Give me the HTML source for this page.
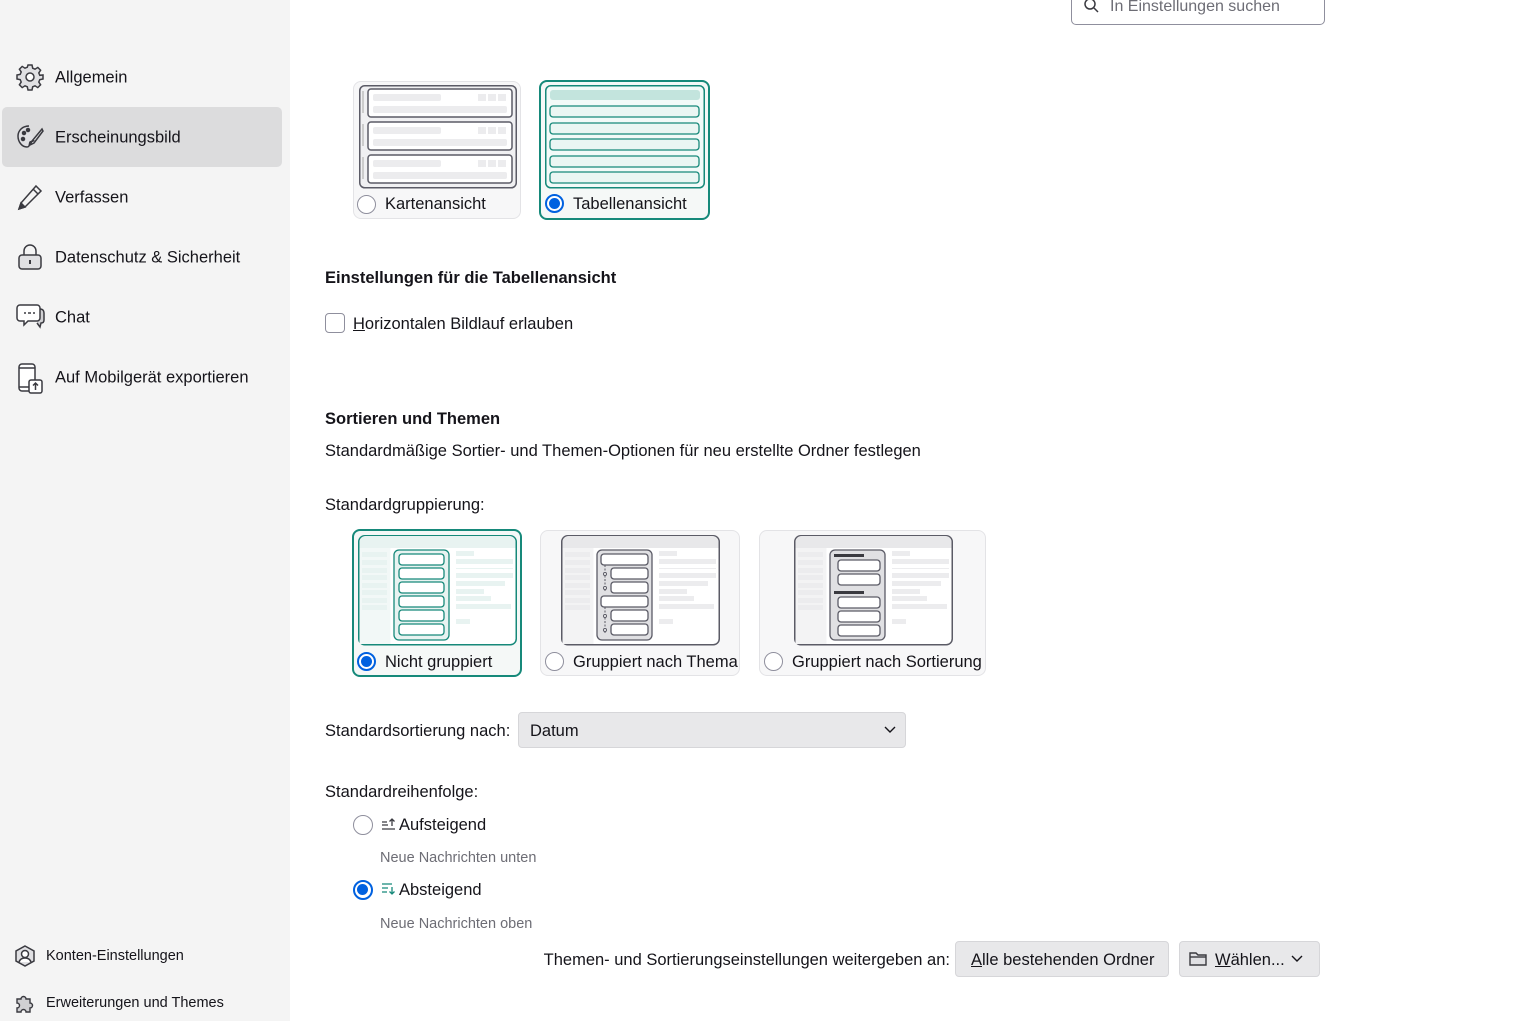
<!DOCTYPE html>
<html><head><meta charset="utf-8">
<style>
*{box-sizing:border-box;margin:0;padding:0}
body{width:1531px;height:1021px;overflow:hidden;background:#fff;font-family:"Liberation Sans",sans-serif;color:#15141a;position:relative;font-size:16.5px}
.a{position:absolute;white-space:nowrap}
#side{position:absolute;left:0;top:0;width:290px;height:1021px;background:#f4f4f4}
.nav{position:absolute;left:2px;width:280px;height:60px;border-radius:5px}
.nav span{position:absolute;left:53px;top:50%;transform:translateY(-45%);font-size:16.5px}
.nav svg{position:absolute;left:14px;top:16px}
.card{position:absolute;background:#f7f7f8;border:1px solid #e3e3e6;border-radius:8px}
.card.sel{border:2px solid #16897a;background:#f5f8f7}
.radio{position:absolute;width:19px;height:19px;border-radius:50%;border:1.5px solid #8f8f9d;background:#fff}
.radio.on{border:2px solid #0061e0;background:#fff}
.radio.on::after{content:"";position:absolute;left:2px;top:2px;width:11px;height:11px;border-radius:50%;background:#0061e0}
.lbl{position:absolute;font-size:16.5px;white-space:nowrap}
.h{font-weight:bold;font-size:16.5px}
.btn{position:absolute;background:#e8e8ea;border:1px solid #d6d6d9;border-radius:4px;font-size:16.5px}
.sub{color:#6d6d75;font-size:14.5px}
</style></head><body>
<div id="side">
  <div class="nav" style="top:47px">
    <svg width="28" height="28" viewBox="0 0 28 28" fill="none" stroke="#3a3a40" stroke-width="1.5"><path d="M12 2h4l.7 3.2 2.3 1 2.8-1.8 2.8 2.8-1.8 2.8 1 2.3L27 12v4l-3.2.7-1 2.3 1.8 2.8-2.8 2.8-2.8-1.8-2.3 1L16 27h-4l-.7-3.2-2.3-1-2.8 1.8-2.8-2.8 1.8-2.8-1-2.3L1 16v-4l3.2-.7 1-2.3-1.8-2.8 2.8-2.8 2.8 1.8 2.3-1z" fill="#e0e0e3"/><circle cx="14" cy="14" r="4" fill="#fff"/></svg>
    <span>Allgemein</span></div>
  <div class="nav" style="top:107px;background:#dcdcdd">
    <svg width="28" height="28" viewBox="0 0 28 28" fill="none" stroke="#3a3a40" stroke-width="1.5"><path d="M13 3C6 3 2 8 2 13c0 6 4 11 9 11 3 0 2-3 3-5 1-1 3 0 4-2" fill="#e0e0e3"/><circle cx="8" cy="10" r="1.5" fill="#3a3a40"/><circle cx="12" cy="7" r="1.5" fill="#3a3a40"/><circle cx="7" cy="16" r="1.5" fill="#3a3a40"/><path d="M26 6L16 18l-2 4 4-2L27 8z"/></svg>
    <span>Erscheinungsbild</span></div>
  <div class="nav" style="top:167px">
    <svg width="28" height="28" viewBox="0 0 28 28" fill="none" stroke="#3a3a40" stroke-width="1.5"><path d="M20 3l5 5L9 24l-6 2 2-6z"/><path d="M17 6l5 5"/><path d="M3 26l2-6 4 4z" fill="#3a3a40"/></svg>
    <span>Verfassen</span></div>
  <div class="nav" style="top:227px">
    <svg width="28" height="28" viewBox="0 0 28 28" fill="none" stroke="#3a3a40" stroke-width="1.5"><path d="M8 12V8a6 6 0 0112 0v4"/><rect x="3" y="12" width="22" height="14" rx="3" fill="#e0e0e3"/><rect x="13" y="17" width="2" height="4" fill="#3a3a40" stroke="none"/></svg>
    <span>Datenschutz &amp; Sicherheit</span></div>
  <div class="nav" style="top:287px">
    <svg width="30" height="28" viewBox="0 0 30 28" fill="none" stroke="#3a3a40" stroke-width="1.5"><path d="M24 6c3 0 4 2 4 4v7c0 2-1 3-3 3l-1 4-3-4" fill="#d0d0d3"/><path d="M4 2h17a3 3 0 013 3v10a3 3 0 01-3 3H12l-4 4v-4H4a3 3 0 01-3-3V5a3 3 0 013-3z" fill="#fff"/><path d="M8 10h2M12 10h3M17 10h2"/></svg>
    <span>Chat</span></div>
  <div class="nav" style="top:347px">
    <svg width="30" height="32" viewBox="0 0 30 32" fill="none" stroke="#3a3a40" stroke-width="1.5"><rect x="3" y="1" width="16" height="27" rx="3" fill="#fff"/><path d="M3 5h16M3 24h10"/><rect x="13" y="17" width="13" height="13" rx="2" fill="#fff"/><path d="M19.5 27v-7M17 22.5l2.5-2.5 2.5 2.5"/></svg>
    <span>Auf Mobilgerät exportieren</span></div>
  <div class="a" style="left:14px;top:945px"><svg width="22" height="22" viewBox="0 0 22 22" fill="none" stroke="#3a3a40" stroke-width="1.5"><path d="M11 1l9 5v10l-9 5-9-5V6z" fill="#e0e0e3"/><circle cx="11" cy="9" r="3.5" fill="#fff"/><path d="M5 17c1-3 3-4 6-4s5 1 6 4" fill="#fff"/></svg></div>
  <div class="a" style="left:46px;top:948px;font-size:14.5px">Konten-Einstellungen</div>
  <div class="a" style="left:14px;top:992px"><svg width="22" height="22" viewBox="0 0 22 22" fill="none" stroke="#3a3a40" stroke-width="1.4"><path d="M3 7h4a2.5 2.5 0 115 0h4v4a2.5 2.5 0 110 5v4h-4a2.5 2.5 0 10-5 0H3v-4a2.5 2.5 0 100-5z" fill="#d0d0d3"/></svg></div>
  <div class="a" style="left:46px;top:995px;font-size:14.5px">Erweiterungen und Themes</div>
</div>

<div class="a" style="left:1071px;top:-10px;width:254px;height:35px;border:1px solid #8f8f9d;border-radius:5px;background:#fff"></div>
<svg class="a" style="left:1084px;top:0" width="16" height="14" viewBox="0 0 16 14" fill="none" stroke="#3a3a40" stroke-width="1.5"><circle cx="6" cy="4" r="5"/><path d="M10 8l4 4"/></svg>
<div class="a" style="left:1110px;top:-2px;color:#6d6d75;font-size:16px">In Einstellungen suchen</div>

<div class="card" style="left:353px;top:81px;width:168px;height:138px"></div>
<svg class="a" style="left:359px;top:85px" width="158" height="104" viewBox="0 0 158 104">
 <rect x="0.75" y="0.75" width="156.5" height="102" rx="5" fill="#f0f0f2" stroke="#5b5b66" stroke-width="1.5"/>
 <g fill="#fff" stroke="#5b5b66" stroke-width="1.5">
 <rect x="9" y="4" width="144" height="28" rx="3"/><rect x="9" y="37" width="144" height="28" rx="3"/><rect x="9" y="70" width="144" height="28" rx="3"/></g>
 <g fill="#ececee"><rect x="14" y="9" width="68" height="7" rx="2"/><rect x="14" y="21" width="134" height="7" rx="2"/><rect x="119" y="9" width="8" height="7"/><rect x="129" y="9" width="8" height="7"/><rect x="139" y="9" width="8" height="7"/>
 <rect x="14" y="42" width="68" height="7" rx="2"/><rect x="14" y="54" width="134" height="7" rx="2"/><rect x="119" y="42" width="8" height="7"/><rect x="129" y="42" width="8" height="7"/><rect x="139" y="42" width="8" height="7"/>
 <rect x="14" y="75" width="68" height="7" rx="2"/><rect x="14" y="87" width="134" height="7" rx="2"/><rect x="119" y="75" width="8" height="7"/><rect x="129" y="75" width="8" height="7"/><rect x="139" y="75" width="8" height="7"/></g>
 <rect x="3" y="6" width="2" height="22" fill="#ccc"/><rect x="3" y="39" width="2" height="22" fill="#ccc"/><rect x="3" y="72" width="2" height="22" fill="#ccc"/>
</svg>
<div class="radio" style="left:357px;top:195px"></div>
<div class="lbl" style="left:385px;top:195px">Kartenansicht</div>

<div class="card sel" style="left:539px;top:80px;width:171px;height:140px"></div>
<svg class="a" style="left:545px;top:85px" width="160" height="104" viewBox="0 0 160 104">
 <rect x="0.75" y="0.75" width="158.5" height="102" rx="5" fill="#f2faf8" stroke="#16897a" stroke-width="1.5"/>
 <rect x="5" y="5" width="150" height="10" rx="3" fill="#c3e4dd"/>
 <g fill="#eaf6f3" stroke="#16897a" stroke-width="1.3">
 <rect x="5" y="21" width="149" height="11" rx="3"/><rect x="5" y="38" width="149" height="11" rx="3"/><rect x="5" y="54" width="149" height="11" rx="3"/><rect x="5" y="71" width="149" height="11" rx="3"/><rect x="5" y="87" width="149" height="11" rx="3"/></g>
</svg>
<div class="radio on" style="left:545px;top:194px"></div>
<div class="lbl" style="left:573px;top:195px">Tabellenansicht</div>

<div class="a h" style="left:325px;top:269px">Einstellungen für die Tabellenansicht</div>
<div class="a" style="left:325px;top:313px;width:20px;height:20px;border:1.5px solid #8f8f9d;border-radius:4px;background:#fff"></div>
<div class="a" style="left:353px;top:315px"><u>H</u>orizontalen Bildlauf erlauben</div>

<div class="a h" style="left:325px;top:410px">Sortieren und Themen</div>
<div class="a" style="left:325px;top:442px">Standardmäßige Sortier- und Themen-Optionen für neu erstellte Ordner festlegen</div>
<div class="a" style="left:325px;top:496px">Standardgruppierung:</div>

<div class="card sel" style="left:352px;top:529px;width:170px;height:148px"></div>
<svg class="a" style="left:358px;top:535px" width="159" height="111" viewBox="0 0 159 111">
 <rect x="0.75" y="0.75" width="157.5" height="109" rx="6" fill="#fff" stroke="#16897a" stroke-width="1.5"/>
 <path d="M1.5 7a6 6 0 016-6h144a6 6 0 016 6v6H1.5z" fill="#e8f3f1"/>
 <rect x="1.5" y="13" width="31" height="96" fill="#f2f8f7"/>
 <g fill="#e8f3f1"><rect x="4" y="17" width="25" height="5"/><rect x="4" y="25" width="25" height="5"/><rect x="4" y="33" width="25" height="5"/><rect x="4" y="40" width="25" height="5"/><rect x="4" y="48" width="25" height="5"/><rect x="4" y="55" width="25" height="5"/><rect x="4" y="63" width="25" height="5"/><rect x="4" y="70" width="25" height="5"/><rect x="98" y="16" width="18" height="5"/><rect x="98" y="24" width="57" height="5"/><rect x="98" y="33" width="57" height="1"/><rect x="98" y="38" width="57" height="5"/><rect x="98" y="46" width="49" height="5"/><rect x="98" y="54" width="28" height="5"/><rect x="98" y="61" width="35" height="5"/><rect x="98" y="69" width="55" height="5"/><rect x="98" y="84" width="14" height="5"/></g>
 <rect x="36" y="15" width="55" height="90" rx="5" fill="#e8f3f1" stroke="#16897a" stroke-width="1.3"/>
 <g fill="#fff" stroke="#16897a" stroke-width="1.3"><rect x="41" y="19" width="45" height="11" rx="3"/><rect x="41" y="33" width="45" height="11" rx="3"/><rect x="41" y="47" width="45" height="11" rx="3"/><rect x="41" y="61" width="45" height="11" rx="3"/><rect x="41" y="75" width="45" height="11" rx="3"/><rect x="41" y="89" width="45" height="11" rx="3"/></g>
</svg>
<div class="radio on" style="left:357px;top:652px"></div>
<div class="lbl" style="left:385px;top:653px">Nicht gruppiert</div>

<div class="card" style="left:540px;top:530px;width:200px;height:146px"></div>
<svg class="a" style="left:561px;top:535px" width="159" height="111" viewBox="0 0 159 111">
 <rect x="0.75" y="0.75" width="157.5" height="109" rx="6" fill="#fff" stroke="#5b5b66" stroke-width="1.5"/>
 <path d="M1.5 7a6 6 0 016-6h144a6 6 0 016 6v6H1.5z" fill="#e8e8ea"/>
 <rect x="1.5" y="13" width="31" height="96" fill="#f3f3f4"/>
 <g fill="#ececee"><rect x="4" y="17" width="25" height="5"/><rect x="4" y="25" width="25" height="5"/><rect x="4" y="33" width="25" height="5"/><rect x="4" y="40" width="25" height="5"/><rect x="4" y="48" width="25" height="5"/><rect x="4" y="55" width="25" height="5"/><rect x="4" y="63" width="25" height="5"/><rect x="4" y="70" width="25" height="5"/><rect x="98" y="16" width="18" height="5"/><rect x="98" y="24" width="57" height="5"/><rect x="98" y="33" width="57" height="1"/><rect x="98" y="38" width="57" height="5"/><rect x="98" y="46" width="49" height="5"/><rect x="98" y="54" width="28" height="5"/><rect x="98" y="61" width="35" height="5"/><rect x="98" y="69" width="55" height="5"/><rect x="98" y="84" width="14" height="5"/></g>
 <rect x="36" y="15" width="55" height="90" rx="5" fill="#e0e0e3" stroke="#5b5b66" stroke-width="1.3"/>
 <g fill="#fff" stroke="#5b5b66" stroke-width="1.3"><rect x="40" y="19" width="47" height="11" rx="3"/><rect x="50" y="33" width="37" height="11" rx="3"/><rect x="50" y="47" width="37" height="11" rx="3"/><rect x="40" y="61" width="47" height="11" rx="3"/><rect x="50" y="75" width="37" height="11" rx="3"/><rect x="50" y="89" width="37" height="11" rx="3"/></g>
 <g stroke="#5b5b66" stroke-width="1" fill="none" stroke-dasharray="2 1.5"><path d="M44 30v26M44 72v26"/></g>
 <g fill="#fff" stroke="#5b5b66"><circle cx="44" cy="39" r="1.5"/><circle cx="44" cy="53" r="1.5"/><circle cx="44" cy="81" r="1.5"/><circle cx="44" cy="95" r="1.5"/></g>
</svg>
<div class="radio" style="left:545px;top:652px"></div>
<div class="lbl" style="left:573px;top:653px">Gruppiert nach Thema</div>

<div class="card" style="left:759px;top:530px;width:227px;height:146px"></div>
<svg class="a" style="left:794px;top:535px" width="159" height="111" viewBox="0 0 159 111">
 <rect x="0.75" y="0.75" width="157.5" height="109" rx="6" fill="#fff" stroke="#5b5b66" stroke-width="1.5"/>
 <path d="M1.5 7a6 6 0 016-6h144a6 6 0 016 6v6H1.5z" fill="#e8e8ea"/>
 <rect x="1.5" y="13" width="31" height="96" fill="#f3f3f4"/>
 <g fill="#ececee"><rect x="4" y="17" width="25" height="5"/><rect x="4" y="25" width="25" height="5"/><rect x="4" y="33" width="25" height="5"/><rect x="4" y="40" width="25" height="5"/><rect x="4" y="48" width="25" height="5"/><rect x="4" y="55" width="25" height="5"/><rect x="4" y="63" width="25" height="5"/><rect x="4" y="70" width="25" height="5"/><rect x="98" y="16" width="18" height="5"/><rect x="98" y="24" width="57" height="5"/><rect x="98" y="33" width="57" height="1"/><rect x="98" y="38" width="57" height="5"/><rect x="98" y="46" width="49" height="5"/><rect x="98" y="54" width="28" height="5"/><rect x="98" y="61" width="35" height="5"/><rect x="98" y="69" width="55" height="5"/><rect x="98" y="84" width="14" height="5"/></g>
 <rect x="36" y="15" width="55" height="90" rx="5" fill="#e0e0e3" stroke="#5b5b66" stroke-width="1.3"/>
 <rect x="40" y="19" width="30" height="3" fill="#3a3a40"/><rect x="40" y="56" width="30" height="3" fill="#3a3a40"/>
 <g fill="#fff" stroke="#5b5b66" stroke-width="1.3"><rect x="44" y="25" width="42" height="11" rx="3"/><rect x="44" y="39" width="42" height="11" rx="3"/><rect x="44" y="62" width="42" height="11" rx="3"/><rect x="44" y="76" width="42" height="11" rx="3"/><rect x="44" y="90" width="42" height="11" rx="3"/></g>
</svg>
<div class="radio" style="left:764px;top:652px"></div>
<div class="lbl" style="left:792px;top:653px">Gruppiert nach Sortierung</div>

<div class="a" style="left:325px;top:722px">Standardsortierung nach:</div>
<div class="btn" style="left:518px;top:712px;width:388px;height:36px"><span class="a" style="left:11px;top:9px">Datum</span>
<svg class="a" style="left:365px;top:13px" width="12" height="8" viewBox="0 0 12 8" fill="none" stroke="#15141a" stroke-width="1.4"><path d="M1 1l5 5 5-5"/></svg></div>

<div class="a" style="left:325px;top:783px">Standardreihenfolge:</div>
<div class="radio" style="left:353px;top:815px;width:20px;height:20px"></div>
<svg class="a" style="left:381px;top:817px" width="16" height="14" viewBox="0 0 16 14" fill="none" stroke="#3a3a40" stroke-width="1.3"><path d="M1 5h5M1 8h6M1 12h13M11 9V2M8.5 4.5L11 2l2.5 2.5"/></svg>
<div class="a" style="left:399px;top:816px">Aufsteigend</div>
<div class="a sub" style="left:380px;top:850px">Neue Nachrichten unten</div>
<div class="radio on" style="left:353px;top:880px;width:20px;height:20px"></div>
<svg class="a" style="left:381px;top:882px" width="16" height="14" viewBox="0 0 16 14" fill="none" stroke="#16897a" stroke-width="1.3"><path d="M1 2h10M1 6h6M1 10h5M11 5v7M8.5 9.5L11 12l2.5-2.5"/></svg>
<div class="a" style="left:399px;top:881px">Absteigend</div>
<div class="a sub" style="left:380px;top:916px">Neue Nachrichten oben</div>

<div class="a" style="right:581px;top:951px">Themen- und Sortierungseinstellungen weitergeben an:</div>
<div class="btn" style="left:955px;top:941px;width:214px;height:36px"><span class="a" style="left:15px;top:9px"><u>A</u>lle bestehenden Ordner</span></div>
<div class="btn" style="left:1179px;top:941px;width:141px;height:36px">
<svg class="a" style="left:9px;top:9px" width="18" height="15" viewBox="0 0 18 15" fill="none" stroke="#3a3a40" stroke-width="1.4"><path d="M1 2h6l2 2h8v10H1z" fill="#e0e0e3"/><path d="M1 6h16"/></svg>
<span class="a" style="left:35px;top:9px"><u>W</u>ählen...</span>
<svg class="a" style="left:111px;top:13px" width="12" height="8" viewBox="0 0 12 8" fill="none" stroke="#15141a" stroke-width="1.4"><path d="M1 1l5 5 5-5"/></svg></div>
</body></html>
